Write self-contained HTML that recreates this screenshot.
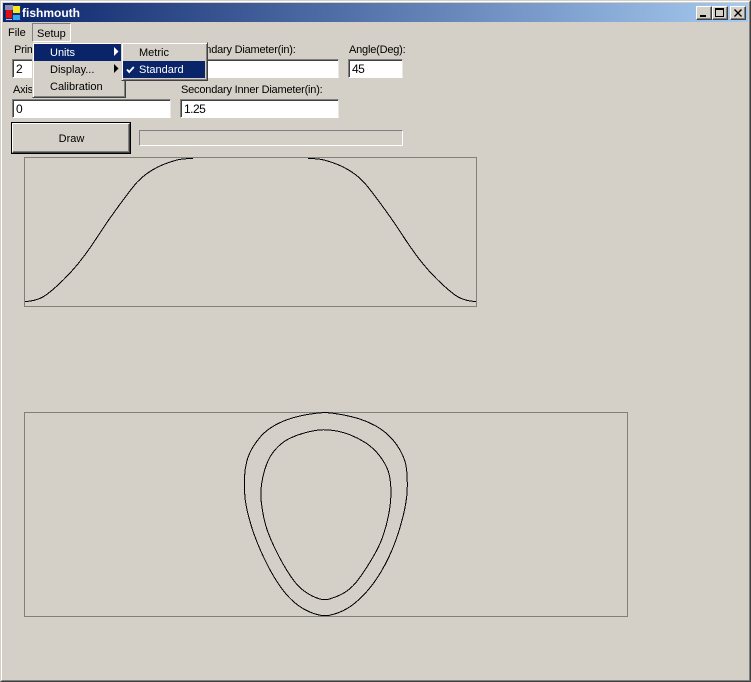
<!DOCTYPE html>
<html>
<head>
<meta charset="utf-8">
<style>
html,body{margin:0;padding:0;background:#d4d0c8}
#w{position:relative;width:751px;height:682px;overflow:hidden;background:#d4d0c8;font:11px/13px "Liberation Sans",sans-serif;color:#000}
#w div{position:absolute;box-sizing:border-box;white-space:nowrap}
.t{height:13px}
.l{letter-spacing:-.2px}
.in{background:#fff;border-top:1px solid #808080;border-left:1px solid #808080;border-right:1px solid #e8e6e0;border-bottom:1px solid #fff;box-shadow:inset 1px 1px 0 #404040;padding:3px 0 0 3px;font-size:12px;line-height:13px;letter-spacing:-.5px}
.btn{background:#d4d0c8;border-top:1px solid #fff;border-left:1px solid #fff;border-right:1px solid #404040;border-bottom:1px solid #404040;box-shadow:inset -1px -1px 0 #808080}
.menu{background:#d4d0c8;border-top:1px solid #d4d0c8;border-left:1px solid #d4d0c8;border-right:1px solid #404040;border-bottom:1px solid #404040;box-shadow:inset 1px 1px 0 #fff,inset -1px -1px 0 #808080}
.hl{background:#0a246a}
.wh{color:#fff}
</style>
</head>
<body>
<div id="w">
<!-- window edges -->
<div style="left:0;top:0;width:751px;height:682px;border-top:1px solid #d4d0c8;border-left:1px solid #d4d0c8;border-right:1px solid #404040;border-bottom:1px solid #404040"></div>
<div style="left:1px;top:1px;width:749px;height:680px;border-top:1px solid #fff;border-left:1px solid #fff;border-right:1px solid #808080;border-bottom:1px solid #808080"></div>
<!-- title bar -->
<div style="left:3px;top:3px;width:745px;height:19px;background:linear-gradient(90deg,#0a246a,#a6caf0)"></div>
<svg style="position:absolute;left:5px;top:5px" width="16" height="16" viewBox="0 0 16 16">
<rect width="16" height="16" fill="#1a2a78"/>
<rect x="0" y="0" width="8" height="5" fill="#8a8ab8"/>
<rect x="1" y="5" width="6" height="8" fill="#e01010"/>
<rect x="8" y="1" width="7" height="7" fill="#f8e820"/>
<rect x="8" y="10" width="7" height="5" fill="#30a8f0"/>
<rect x="1" y="14" width="6" height="1" fill="#c0c0c0"/>
</svg>
<div class="t" style="left:22px;top:6px;font:bold 12px/14px 'Liberation Sans',sans-serif;color:#fff">fishmouth</div>
<!-- caption buttons -->
<div class="btn" style="left:696px;top:6px;width:16px;height:14px"></div>
<div style="left:700px;top:15px;width:6px;height:2px;background:#000"></div>
<div class="btn" style="left:712px;top:6px;width:16px;height:14px"></div>
<div style="left:715px;top:8px;width:9px;height:9px;border:1px solid #000;border-top-width:2px"></div>
<div class="btn" style="left:730px;top:6px;width:16px;height:14px"></div>
<svg style="position:absolute;left:734px;top:9px" width="8" height="8" viewBox="0 0 8 8"><path d="M0.5 0.5L7.5 7.5M7.5 0.5L0.5 7.5" stroke="#000" stroke-width="1.4" fill="none"/></svg>

<!-- menu bar -->
<div class="t" style="left:8px;top:26px;top:27px">File</div>
<div style="left:32px;top:23px;width:39px;height:19px;border-top:1px solid #808080;border-left:1px solid #808080;border-right:1px solid #fff;border-bottom:1px solid #fff"></div>
<div class="t" style="left:37px;top:28px">Setup</div>

<!-- form -->
<div class="t l" style="left:14px;top:44px">Primary Diameter(in):</div>
<div class="t l" style="left:181px;top:44px">Secondary Diameter(in):</div>
<div class="t l" style="left:349px;top:44px">Angle(Deg):</div>
<div class="in" style="left:12px;top:59px;width:159px;height:19px">2</div>
<div class="in" style="left:180px;top:59px;width:159px;height:19px"></div>
<div class="in" style="left:348px;top:59px;width:55px;height:19px">45</div>
<div class="t l" style="left:13px;top:84px">Axis Offset(in):</div>
<div class="t l" style="left:181px;top:84px">Secondary Inner Diameter(in):</div>
<div class="in" style="left:12px;top:99px;width:159px;height:19px">0</div>
<div class="in" style="left:180px;top:99px;width:159px;height:19px">1.25</div>
<div style="left:11px;top:122px;width:120px;height:32px;border:1px solid #000;background:#d4d0c8"></div>
<div class="btn" style="left:12px;top:123px;width:118px;height:30px"></div>
<div class="t" style="left:11px;top:132px;width:121px;top:133px;text-align:center">Draw</div>
<div style="left:139px;top:130px;width:264px;height:16px;border-top:1px solid #808080;border-left:1px solid #808080;border-right:1px solid #fff;border-bottom:1px solid #fff"></div>

<!-- graphs -->
<div style="left:24px;top:157px;width:453px;height:150px;border:1px solid #808078"></div>
<div style="left:24px;top:412px;width:604px;height:205px;border:1px solid #808078"></div>
<svg style="position:absolute;left:0;top:0" width="751" height="682" viewBox="0 0 751 682">
<g fill="none" stroke="#000" stroke-width="1" shape-rendering="crispEdges">
<path d="M25 301.5Q38 301 46.7 294.5Q58 286 70 273Q83 259 97 237.5Q111 215.5 133 187Q148 167.5 177 160Q183 158.5 193 158.5"/>
<path transform="translate(501 0) scale(-1 1)" d="M25 301.5Q38 301 46.7 294.5Q58 286 70 273Q83 259 97 237.5Q111 215.5 133 187Q148 167.5 177 160Q183 158.5 193 158.5"/>
<path d="M326 412.6Q331 412.8 341.5 414.6Q352 416.5 360 419.1Q368 421.7 375.5 425.8Q383 430 389 435.8Q395 441.7 399 448.3Q403 455 405 461.5Q407 468 407.2 479Q407.5 490 406.7 496.5Q406 503 404.5 510Q403 517 400 527.5Q397 538 392 550Q387 562 380 573.5Q373 585 365 593.5Q357 602 350 606.7Q343 611.5 334.5 614Q326 617 317 614.5Q308 612 300.5 607Q293 602 286.5 594.5Q280 587 273.5 576Q267 565 261 551.5Q255 538 251.5 526.5Q248 515 246.5 507.5Q245 500 244.6 492.5Q244.3 485 244.5 477.5Q244.7 470 246.5 462.5Q248.3 455 252.2 448.3Q256 441.7 261.3 435.8Q266.7 430 274.8 425.3Q283 420.7 293 417.8Q303 415 312 413.8Q321 412.5 326 412.6Z"/>
<path d="M319 430Q325 429.3 333.5 430.5Q342 431.7 350 434.8Q358 438 364.8 442.3Q371.7 446.7 376.7 452.3Q381.7 458 385 464Q388.3 470 389.3 475Q390.3 480 390.7 485Q391 490 390.8 497.5Q390.5 505 388.6 515Q386.7 525 383.3 535Q380 545 373.3 556.5Q366.7 568 359.8 577.5Q353 587 346.5 591.3Q340 595.7 332.8 597.8Q325.7 601 319.3 598.8Q313 597 305.5 592Q298 587 291.5 577.5Q285 568 279 556.5Q273 545 269 535Q265 525 263 513.5Q261 502 260.8 496Q260.7 490 261.7 483.3Q262.7 476.7 264.7 469.8Q266.7 463 269.8 457.3Q273 451.7 278 446.7Q283 441.7 289.8 438.3Q296.7 435 304.8 432.8Q313 430.7 319 430Z"/>
</g>
</svg>

<!-- dropdown -->
<div class="menu" style="left:32px;top:42px;width:94px;height:56px"></div>
<div class="hl" style="left:34px;top:44px;width:89px;height:17px"></div>
<div class="t wh" style="left:50px;top:47px">Units</div>
<svg style="position:absolute;left:113px;top:47px" width="6" height="10"><path d="M1 0V9L5.5 4.5Z" fill="#fff"/></svg>
<div class="t" style="left:50px;top:64px">Display...</div>
<svg style="position:absolute;left:113px;top:64px" width="6" height="10"><path d="M1 0V9L5.5 4.5Z" fill="#000"/></svg>
<div class="t" style="left:50px;top:81px">Calibration</div>
<!-- submenu -->
<div class="menu" style="left:121px;top:42px;width:87px;height:39px"></div>
<div class="t" style="left:139px;top:47px">Metric</div>
<div class="hl" style="left:123px;top:61px;width:82px;height:17px"></div>
<svg style="position:absolute;left:126px;top:66px" width="9" height="8"><path d="M1 3.5L3.2 6L7.8 1" fill="none" stroke="#fff" stroke-width="1.8"/></svg>
<div class="t wh" style="left:139px;top:64px">Standard</div>
</div>
</body>
</html>
